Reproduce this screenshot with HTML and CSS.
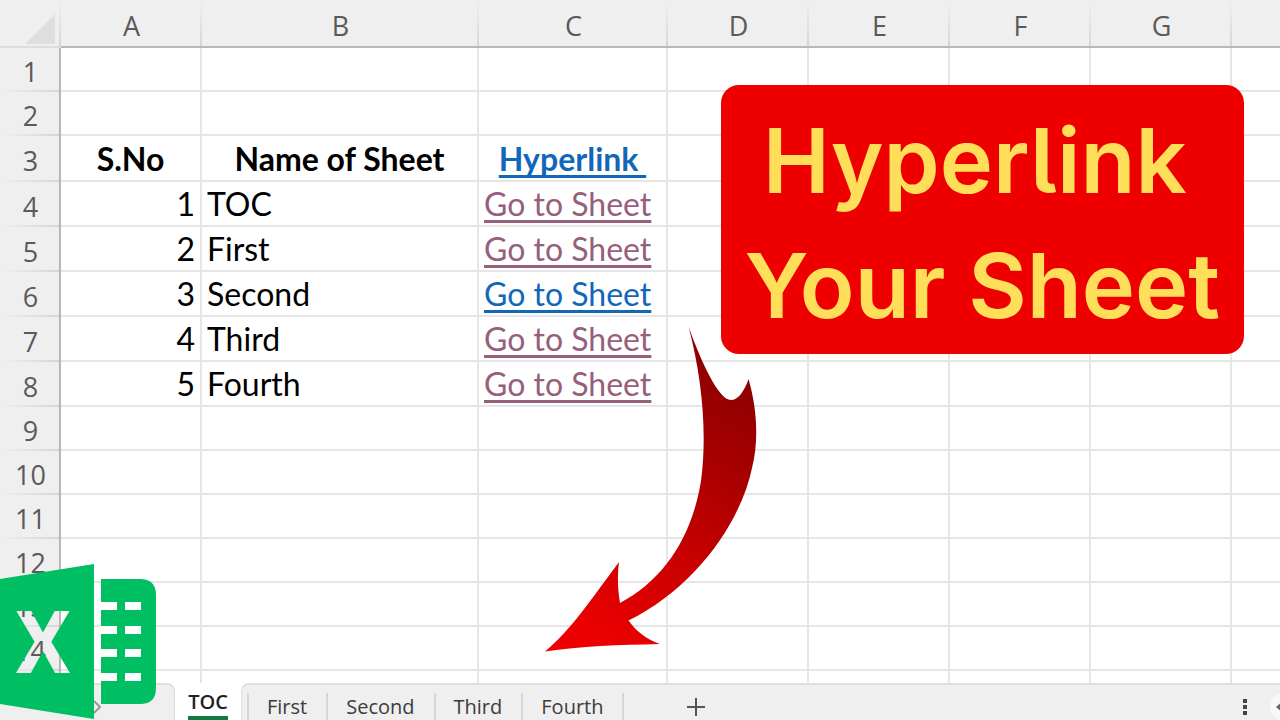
FILE: index.html
```html
<!DOCTYPE html>
<html lang="en">

<head>
    <meta charset="UTF-8">
    <meta name="viewport" content="width=device-width, initial-scale=1.0">
    <title>Hyperlink Your Sheet</title>
    <link rel="stylesheet" href="styles.css">
</head>

<body>
    <main class="sheet">
        <table class="grid">
            <colgroup>
                <col class="col-index">
                <col class="col-a">
                <col class="col-b">
                <col class="col-c">
                <col class="col-std">
                <col class="col-std">
                <col class="col-std">
                <col class="col-std">
                <col>
            </colgroup>
            <thead>
                <tr>
                    <td class="corner">
                        <svg class="corner-mark" viewBox="0 0 30 30" aria-hidden="true"><path d="M30 0V30H0Z" fill="#dedede"/></svg>
                    </td>
                    <th scope="col">A</th>
                    <th scope="col">B</th>
                    <th scope="col">C</th>
                    <th scope="col">D</th>
                    <th scope="col">E</th>
                    <th scope="col">F</th>
                    <th scope="col">G</th>
                    <th></th>
                </tr>
            </thead>
            <tbody>
                <tr><th scope="row">1</th><td></td><td></td><td></td><td></td><td></td><td></td><td></td><td></td></tr>
                <tr><th scope="row">2</th><td></td><td></td><td></td><td></td><td></td><td></td><td></td><td></td></tr>
                <tr class="title-row">
                    <th scope="row">3</th>
                    <td>S.No</td>
                    <td>Name of Sheet</td>
                    <td><a class="link" href="#toc">Hyperlink </a></td>
                    <td></td><td></td><td></td><td></td><td></td>
                </tr>
                <tr class="data-row">
                    <th scope="row">4</th>
                    <td class="num">1</td>
                    <td>TOC</td>
                    <td><a class="link visited" href="#toc">Go to Sheet</a></td>
                    <td></td><td></td><td></td><td></td><td></td>
                </tr>
                <tr class="data-row">
                    <th scope="row">5</th>
                    <td class="num">2</td>
                    <td>First</td>
                    <td><a class="link visited" href="#first">Go to Sheet</a></td>
                    <td></td><td></td><td></td><td></td><td></td>
                </tr>
                <tr class="data-row">
                    <th scope="row">6</th>
                    <td class="num">3</td>
                    <td>Second</td>
                    <td><a class="link" href="#second">Go to Sheet</a></td>
                    <td></td><td></td><td></td><td></td><td></td>
                </tr>
                <tr class="data-row">
                    <th scope="row">7</th>
                    <td class="num">4</td>
                    <td>Third</td>
                    <td><a class="link visited" href="#third">Go to Sheet</a></td>
                    <td></td><td></td><td></td><td></td><td></td>
                </tr>
                <tr class="data-row">
                    <th scope="row">8</th>
                    <td class="num">5</td>
                    <td>Fourth</td>
                    <td><a class="link visited" href="#fourth">Go to Sheet</a></td>
                    <td></td><td></td><td></td><td></td><td></td>
                </tr>
                <tr><th scope="row">9</th><td></td><td></td><td></td><td></td><td></td><td></td><td></td><td></td></tr>
                <tr><th scope="row">10</th><td></td><td></td><td></td><td></td><td></td><td></td><td></td><td></td></tr>
                <tr><th scope="row">11</th><td></td><td></td><td></td><td></td><td></td><td></td><td></td><td></td></tr>
                <tr><th scope="row">12</th><td></td><td></td><td></td><td></td><td></td><td></td><td></td><td></td></tr>
                <tr><th scope="row">13</th><td></td><td></td><td></td><td></td><td></td><td></td><td></td><td></td></tr>
                <tr><th scope="row">14</th><td></td><td></td><td></td><td></td><td></td><td></td><td></td><td></td></tr>
                <tr><th></th><td></td><td></td><td></td><td></td><td></td><td></td><td></td><td></td></tr>
            </tbody>
        </table>
    </main>

    <footer class="tab-bar">
        <div class="tab-nav">
            <button class="icon-btn" type="button" aria-label="Next sheet">
                <svg width="8" height="14" viewBox="0 0 8 14"><path d="M1 1L7 7L1 13" fill="none" stroke="#9a9a9a" stroke-width="2"/></svg>
            </button>
        </div>
        <button class="tab-active" type="button"><span>TOC</span></button>
        <div class="tab-list">
            <button class="tab" type="button">First</button>
            <button class="tab" type="button">Second</button>
            <button class="tab" type="button">Third</button>
            <button class="tab" type="button">Fourth</button>
            <button class="icon-btn add" type="button" aria-label="New sheet">
                <svg width="18" height="18" viewBox="0 0 18 18"><path d="M9 0V18M0 9H18" stroke="#555" stroke-width="2"/></svg>
            </button>
            <button class="icon-btn more" type="button" aria-label="More">
                <svg width="4" height="16" viewBox="0 0 4 16"><path d="M0 0h4v4H0zM0 6h4v4H0zM0 12h4v4H0z" fill="#444"/></svg>
            </button>
            <button class="icon-btn scroll" type="button" aria-label="Scroll left">
                <svg width="10" height="28" viewBox="0 0 10 28"><circle cx="14" cy="14" r="14" fill="#f8f8f8"/><path d="M10 10.500L6 14L10 17.500Z" fill="#666"/></svg>
            </button>
        </div>
    </footer>

    <h1 class="banner">Hyperlink&thinsp;<br>Your Sheet</h1>

    <svg class="arrow" width="212" height="326" viewBox="0 0 212 326" aria-hidden="true">
        <defs>
            <linearGradient id="arrow-fill" x1="190" y1="60" x2="40" y2="310" gradientUnits="userSpaceOnUse">
                <stop offset="0" stop-color="#900000"/>
                <stop offset="1" stop-color="#ee0000"/>
            </linearGradient>
        </defs>
        <path fill="url(#arrow-fill)" d="M143.500 .5C157 38 174 74 186 74C193 74 199 66 203.500 53C212 82 214 115 207 142C196 196 150 262 83.500 294.500C91 305 101 313 115 318C75 319 35 320 0 325.500C25 305 45 275 74 236C72 250 73 265 75 277C120 253 147 210 156 155C162 110 158 55 143.500 .5Z"/>
    </svg>

    <svg class="logo" width="156" height="157" viewBox="0 0 156 157" role="img" aria-label="Excel">
        <mask id="logo-letter">
            <rect width="156" height="157" fill="#fff"/>
            <text class="logo-text" x="43" y="110" text-anchor="middle" fill="#000">X</text>
        </mask>
        <path d="M0 16L94 1V156L0 141Z" fill="#00bf63" mask="url(#logo-letter)"/>
        <path fill="#00bf63" d="M101 16H140Q156 16 156 32V125Q156 141 140 141H101V118H117V110H101V94H117V86H101V71H117V63H101V47H117V39H101Z"/>
        <path fill="#fff" d="M101 39h16v8h-16zM125 39h16v8h-16zM101 63h16v8h-16zM125 63h16v8h-16zM101 86h16v8h-16zM125 86h16v8h-16zM101 110h16v8h-16zM125 110h16v8h-16z"/>
    </svg>
</body>

</html>
```
FILE: styles.css
```css
* {
    box-sizing: border-box;
}

body {
    margin: 0;
    height: 100vh;
    display: flex;
    flex-direction: column;
    position: relative;
    overflow: hidden;
    background: #fff;
    font-family: "Open Sans", "Noto Sans", sans-serif;
}

button {
    border: none;
    background: none;
    padding: 0;
    font: inherit;
    color: inherit;
    cursor: pointer;
}

/* grid */
.sheet {
    flex: 1;
    min-height: 0;
    overflow: hidden;
}

.grid {
    width: 100%;
    table-layout: fixed;
    border-collapse: separate;
    border-spacing: 0;
}

.col-index {
    width: 61px;
}

.col-a {
    width: 141px;
}

.col-b {
    width: 277px;
}

.col-c {
    width: 189px;
}

.col-std {
    width: 141px;
}

.grid th,
.grid td {
    height: 44px;
    padding: 0 5px;
    border-right: 2px solid #e6e6e6;
    border-bottom: 2px solid #e6e6e6;
    line-height: 40px;
    white-space: nowrap;
}

.grid td:last-child,
.grid thead th:last-child {
    border-right: none;
}

.grid th {
    color: #5a5a5a;
    font-size: 27px;
    font-weight: 400;
    text-align: center;
}

.grid thead th,
.grid thead .corner {
    height: 48px;
    padding: 5px 0 0;
    border-right: none;
    border-bottom: 2px solid #b8b8b8;
    background: linear-gradient(to bottom, #efefef, #d6d6d6) right / 2px 100% no-repeat #efefef;
}

.grid thead th:last-child {
    background: #efefef;
}

.grid thead .corner {
    padding: 12px 6px 0 0;
    border-bottom-color: #dcdcdc;
}

.corner-mark {
    display: block;
    width: 30px;
    height: 30px;
    margin-left: auto;
}

.grid tbody th {
    padding: 4px 0 0 2px;
    border-right-color: #b8b8b8;
    border-bottom: none;
    line-height: 38px;
    background: linear-gradient(to right, #efefef, #d6d6d6) bottom / 100% 2px no-repeat #efefef;
}

.grid .title-row td,
.grid .data-row td {
    padding-top: 1px;
    font-family: Lato, "Open Sans", sans-serif;
    font-size: 32px;
}

.grid .title-row td {
    height: 46px;
    font-weight: 700;
    text-align: center;
}

.grid .data-row td {
    height: 45px;
}

.grid .data-row .num {
    text-align: right;
}

.link {
    color: #1267b8;
    white-space: pre;
    text-decoration: underline;
    text-decoration-thickness: 3px;
    text-underline-offset: 4px;
    text-decoration-skip-ink: none;
}

.link.visited {
    color: #96607d;
}

/* sheet tabs */
.tab-bar {
    display: flex;
    height: 37px;
    color: #3c3c3c;
    font-size: 20px;
}

.tab-nav,
.tab-list {
    display: flex;
    align-items: center;
    background: #efefef;
    border-top: 2px solid #dedede;
    padding-top: 8px;
}

.tab-nav {
    width: 175px;
    justify-content: flex-end;
    padding-right: 73px;
    border-right: 1px solid #dedede;
    border-top-right-radius: 8px;
}

.tab-active {
    width: 66px;
    color: #222;
    font-weight: 600;
}

.tab-active span {
    display: inline-block;
    height: 37px;
    line-height: 38px;
    border-bottom: 4px solid #107c41;
}

.tab-list {
    flex: 1;
    padding-left: 5px;
    border-left: 1px solid #dedede;
    border-top-left-radius: 8px;
}

.tab {
    height: 100%;
    padding: 0 19px 0 18px;
    border-left: 2px solid #d6d6d6;
}

.icon-btn {
    display: flex;
}

.icon-btn.add {
    height: 100%;
    align-items: center;
    padding-left: 63px;
    border-left: 2px solid #d6d6d6;
}

.icon-btn.more {
    margin-left: auto;
    margin-right: 23px;
}

/* overlays */
.banner {
    position: absolute;
    top: 85px;
    right: 36px;
    margin: 0;
    padding: 13px 24px 6px;
    border-radius: 18px;
    background: #ef0000;
    color: #ffde59;
    font-family: Inter, sans-serif;
    font-size: 90px;
    font-weight: 600;
    font-feature-settings: "cv05";
    line-height: 125px;
    text-align: center;
}

.arrow {
    position: absolute;
    top: 326px;
    left: 545px;
}

.logo {
    position: absolute;
    left: 0;
    bottom: 0;
}

.logo-text {
    font-family: Roboto, sans-serif;
    font-size: 88px;
    font-weight: 700;
}
```
